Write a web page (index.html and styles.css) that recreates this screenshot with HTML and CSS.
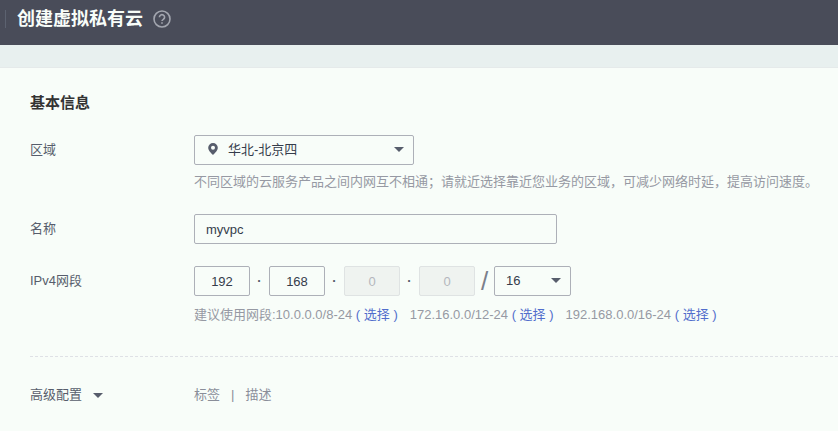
FILE: index.html
```html
<!DOCTYPE html>
<html lang="zh-CN">
<head>
  <meta charset="UTF-8" />
  <title>创建虚拟私有云</title>
  <link rel="stylesheet" href="styles.css">
</head>
<body>
  <header class="topbar">
    <span class="bar"></span>
    <h1>创建虚拟私有云</h1>
    <button type="button" class="help" aria-label="帮助">
      <svg width="18" height="18" viewBox="0 0 18 18" fill="none" stroke="currentColor" stroke-width="1.6">
        <circle cx="9" cy="9" r="8" />
        <path d="M6.400 7.300a2.600 2.500 0 1 1 4 2c-.9.6-1.400.9-1.400 1.800" />
        <path d="M9 12.200v1.600" />
      </svg>
    </button>
  </header>

  <main class="panel">
    <h2>基本信息</h2>
    <form id="vpcForm">
      <div class="row">
        <label class="name" for="region">区域</label>
        <div class="field">
          <div class="select region">
            <svg class="pin" width="10" height="12" viewBox="0 0 10 12">
              <path fill="#575d6c" fill-rule="evenodd" d="M5 0a4.800 4.800 0 0 1 4.800 4.800C9.800 7.800 6.900 10 5 12 3.100 10 .2 7.800.2 4.800A4.800 4.800 0 0 1 5 0zM5 2.700a2 2 0 1 0 0 4 2 2 0 0 0 0-4z" />
            </svg>
            <select id="region" name="region">
              <option>华北-北京四</option>
            </select>
          </div>
          <p class="hint">不同区域的云服务产品之间内网互不相通；请就近选择靠近您业务的区域，可减少网络时延，提高访问速度。</p>
        </div>
      </div>

      <div class="row">
        <label class="name" for="vpcName">名称</label>
        <div class="field">
          <input class="vpc-name" type="text" id="vpcName" name="name" value="myvpc" />
        </div>
      </div>

      <div class="row">
        <label class="name" for="ip1">IPv4网段</label>
        <div class="field">
          <div class="cidr">
            <input type="text" id="ip1" value="192" />
            <span class="dot">·</span>
            <input type="text" aria-label="第二段" value="168" />
            <span class="dot">·</span>
            <input type="text" aria-label="第三段" value="0" disabled />
            <span class="dot">·</span>
            <input type="text" aria-label="第四段" value="0" disabled />
            <span class="slash">/</span>
            <div class="select mask">
              <select aria-label="掩码">
                <option>16</option>
              </select>
            </div>
          </div>
          <p class="hint ranges">
            <span>建议使用网段:10.0.0.0/8-24 <a href="#">( 选择 )</a></span>
            <span>172.16.0.0/12-24 <a href="#">( 选择 )</a></span>
            <span>192.168.0.0/16-24 <a href="#">( 选择 )</a></span>
          </p>
        </div>
      </div>

      <div class="advanced">
        <button type="button" class="toggle">高级配置</button>
        <p class="items"><span>标签</span><span>|</span><span>描述</span></p>
      </div>
    </form>
  </main>
</body>
</html>
```

FILE: styles.css
```css
* {
  box-sizing: border-box;
}
body {
  margin: 0;
  background-color: #e8f0ef;
  color: #575d6c;
  font-family: "Liberation Sans", "Noto Sans CJK SC", sans-serif;
  font-size: 13px;
  line-height: 20px;
}
h1, h2, p {
  margin: 0;
}
.topbar {
  display: flex;
  align-items: center;
  height: 45px;
  padding: 0 5px 8px;
  background-color: #494c59;
}
.topbar .bar {
  width: 1px;
  height: 18px;
  margin-right: 11px;
  background-color: #5c6270;
}
.topbar h1 {
  color: #f8fdf9;
  font-size: 18px;
  line-height: 24px;
}
.help {
  display: flex;
  margin-left: 10px;
  padding: 0;
  border: none;
  background: none;
  color: #a3a6af;
  cursor: pointer;
}
.panel {
  min-height: calc(100vh - 67px);
  margin-top: 22px;
  padding: 23px 0 24px 30px;
  border-top: 1px solid #e5eaea;
  background-color: #f8fdf9;
}
.panel h2 {
  margin-bottom: 20px;
  color: #333;
  font-size: 15px;
  line-height: 24px;
}
.row {
  display: flex;
  margin-bottom: 22px;
}
.name {
  flex: none;
  width: 164px;
  padding-top: 5px;
}
.field {
  flex: 1;
  min-width: 0;
}
input, select {
  display: block;
  width: 100%;
  height: 30px;
  padding: 0 11px;
  border: 1px solid #adb0b8;
  border-radius: 2px;
  background-color: #f8fdf9;
  color: #353c4b;
  font: inherit;
  appearance: none;
}
.vpc-name {
  max-width: 363px;
}
.select {
  position: relative;
}
/* drop-down arrow */
.select::after {
  content: "";
  position: absolute;
  top: 12px;
  right: 10px;
  border: 5px solid transparent;
  border-top-color: #575d6c;
  border-bottom: none;
  pointer-events: none;
}
.region {
  max-width: 220px;
}
.region select {
  padding-left: 33px;
}
.pin {
  position: absolute;
  top: 8px;
  left: 14px;
}
.hint {
  margin-top: 7px;
  color: #9699a3;
  white-space: nowrap;
}
.cidr {
  display: flex;
  align-items: center;
}
.cidr input {
  width: 56px;
  padding: 0;
  text-align: center;
}
.cidr input:disabled {
  border-color: #dfe3e3;
  background-color: #eff3f0;
  color: #b4b7bd;
}
.dot {
  width: 19px;
  font-weight: bold;
  text-align: center;
}
.slash {
  width: 19px;
  color: #7b808c;
  font-size: 26px;
  text-align: center;
}
.mask {
  width: 77px;
}
.ranges {
  display: flex;
  gap: 12px;
  margin-top: 9px;
}
a {
  color: #526ecc;
  text-decoration: none;
}
.advanced {
  display: flex;
  margin-top: 31px;
  padding-top: 28px;
  border-top: 1px dashed #dfe1e6;
}
.toggle {
  display: flex;
  align-items: center;
  gap: 11px;
  width: 164px;
  padding: 0;
  border: none;
  background: none;
  color: inherit;
  font: inherit;
  cursor: pointer;
}
.toggle::after {
  content: "";
  border: 5px solid transparent;
  border-top-color: #575d6c;
  border-bottom: none;
}
.items {
  display: flex;
  gap: 11px;
  color: #8a8e99;
}
```
